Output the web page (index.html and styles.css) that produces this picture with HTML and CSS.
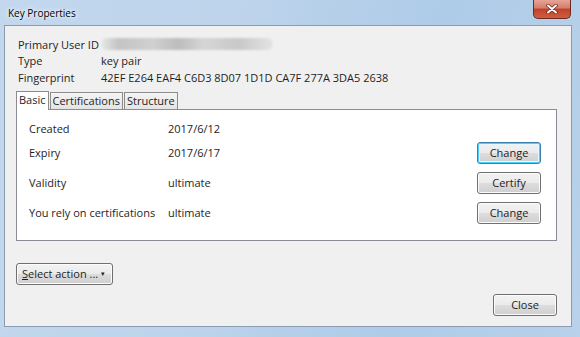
FILE: index.html
```html
<!DOCTYPE html>
<html lang="en">
<head>
    <meta charset="UTF-8">
    <title>Key Properties</title>
    <link rel="stylesheet" href="styles.css">
</head>
<body>
    <div class="window">
        <div class="titlebar">
            <span class="title">Key Properties</span>
            <span class="close-btn">
                <svg width="14" height="10" viewBox="0 0 14 10">
                    <path d="M3 1.5 L11 8.5 M11 1.5 L3 8.5" stroke="#6b1d14" stroke-width="3.4" stroke-linecap="round"/>
                    <path d="M3 1.5 L11 8.5 M11 1.5 L3 8.5" stroke="#ffffff" stroke-width="2" stroke-linecap="round"/>
                </svg>
            </span>
        </div>
        <div class="client">
            <div class="info">
                <span>Primary User ID</span><span class="blurred"></span>
                <span>Type</span><span>key pair</span>
                <span>Fingerprint</span><span>42EF E264 EAF4 C6D3 8D07 1D1D CA7F 277A 3DA5 2638</span>
            </div>

            <div class="tabs">
                <span class="tab active">Basic</span>
                <span class="tab">Certifications</span>
                <span class="tab">Structure</span>
            </div>
            <div class="pane">
                <div class="row first">
                    <span class="label">Created</span>
                    <span class="value">2017/6/12</span>
                </div>
                <div class="row">
                    <span class="label">Expiry</span>
                    <span class="value">2017/6/17</span>
                    <button class="btn default">Change</button>
                </div>
                <div class="row">
                    <span class="label">Validity</span>
                    <span class="value">ultimate</span>
                    <button class="btn">Certify</button>
                </div>
                <div class="row">
                    <span class="label">You rely on certifications</span>
                    <span class="value">ultimate</span>
                    <button class="btn">Change</button>
                </div>
            </div>

            <div class="actions">
                <button class="btn select-btn"><u>S</u>elect action ... <span class="arrow">&#9662;</span></button>
            </div>
            <div class="footer">
                <button class="btn">Close</button>
            </div>
        </div>
    </div>
</body>
</html>
```

FILE: styles.css
```css
body {
    margin: 0;
    font-family: "Open Sans", "Noto Sans", sans-serif;
    font-size: 11px;
    color: #1e1e1e;
}
.window {
    width: 580px;
    height: 337px;
    box-sizing: border-box;
    background: linear-gradient(100deg, #c3d8ee 0%, #bcd3eb 40%, #aecbe8 70%, #b9d1ea 100%);
    display: flex;
    flex-direction: column;
    padding: 0 8px 10px 4px;
}
.titlebar {
    height: 25px;
    display: flex;
    align-items: flex-start;
    justify-content: space-between;
}
.title {
    margin: 6px 0 0 4px;
    font-size: 10px;
    color: #000;
    text-shadow: 0 0 6px #ffffff, 0 0 3px #ffffff;
}
.close-btn {
    width: 38px;
    height: 19px;
    margin-right: 1px;
    border: 1px solid #6a2a22;
    border-top: none;
    border-radius: 0 0 5px 5px;
    background: linear-gradient(#e6a497 0%, #d37c6c 45%, #c2402a 50%, #cf5e3f 100%);
    display: flex;
    align-items: center;
    justify-content: center;
    box-sizing: border-box;
}
.client {
    flex: 1;
    background: #f0f0f0;
    border: 1px solid #8a9cb0;
    display: flex;
    flex-direction: column;
    padding: 0 14px 0 11px;
}
.info {
    display: grid;
    grid-template-columns: 83px 1fr;
    grid-auto-rows: 16.5px;
    align-items: center;
    margin-top: 10px;
    padding-left: 2px;
    white-space: nowrap;
}
.blurred {
    width: 172px;
    height: 12px;
    border-radius: 6px;
    background: linear-gradient(90deg, #e8e8e8 0%, #c4c4c4 10%, #d0d0d0 30%, #bdbdbd 45%, #d6d6d6 60%, #c8c8c8 80%, #e4e4e4 100%);
    filter: blur(1px);
}
.tabs {
    display: flex;
    margin-top: 5px;
    height: 18px;
    align-items: flex-end;
}
.tab {
    border: 1px solid #8c8c8c;
    border-bottom: none;
    background: linear-gradient(#f4f4f4, #e4e4e4);
    padding: 0 2px;
    height: 16px;
    line-height: 15px;
    margin-right: 1px;
}
.tab.active {
    background: #ffffff;
    height: 18px;
    position: relative;
    top: 1px;
    z-index: 1;
}
.pane {
    background: #ffffff;
    border: 1px solid #898c95;
    padding: 8px 15px 16px 12px;
    display: flex;
    flex-direction: column;
    gap: 8px;
}
.row {
    display: flex;
    align-items: center;
    height: 22px;
    white-space: nowrap;
}
.row.first {
    margin-bottom: -6px;
}
.label {
    width: 139px;
}
.value {
    flex: 1;
}
.btn {
    font-family: inherit;
    font-size: 11px;
    color: #1e1e1e;
    width: 64px;
    height: 22px;
    padding: 0;
    border: 1px solid #707070;
    border-radius: 3px;
    background: linear-gradient(#f2f2f2 0%, #ebebeb 50%, #dddddd 51%, #cfcfcf 100%);
    box-shadow: inset 0 0 0 1px #fcfcfc;
    white-space: nowrap;
}
.btn.default {
    border-color: #3c7fb1;
    box-shadow: inset 0 0 0 1px #48d0ff, inset 0 0 0 2px #e8f6fd;
}
.actions {
    display: flex;
    margin-top: 22px;
}
.select-btn {
    width: 97px;
    text-align: left;
    padding-left: 5px;
}
.arrow {
    font-size: 7px;
    vertical-align: 2px;
}
.footer {
    display: flex;
    justify-content: flex-end;
    margin-top: 9px;
}
```
